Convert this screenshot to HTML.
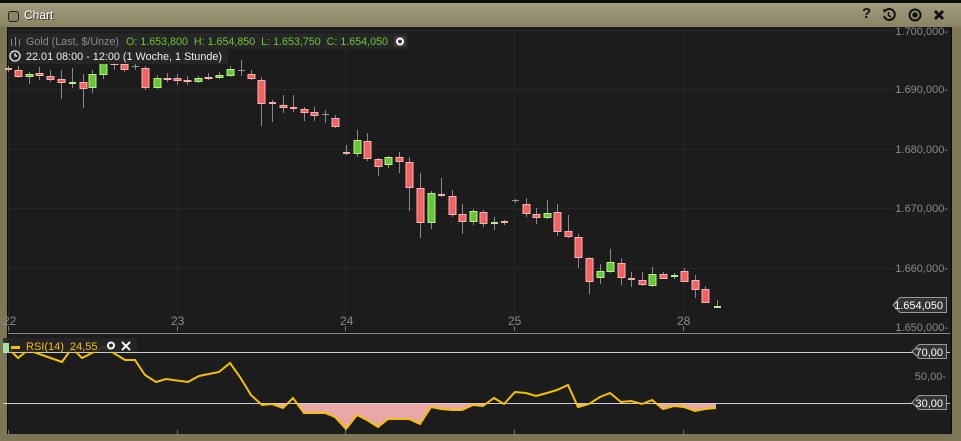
<!DOCTYPE html>
<html><head><meta charset="utf-8"><style>
html,body{margin:0;padding:0;background:#7d7758;}
body{width:961px;height:441px;overflow:hidden;position:relative;font-family:"Liberation Sans",sans-serif;}
#top{position:absolute;left:0;top:0;width:961px;height:3px;background:#0c0c0c;}
#title{position:absolute;left:0;top:3px;width:961px;height:24px;background:linear-gradient(#a29c7c,#8a8464);}
#title .t{position:absolute;left:24px;top:5px;font-size:12px;color:#fff;text-shadow:1px 1px 0 #333;}
#title .cb{position:absolute;left:8px;top:8px;width:9px;height:9px;border:1px solid #222;border-radius:3px;background:#8a8464;}
#chart{position:absolute;left:7px;top:27px;width:943px;height:407px;background:#1c1c1c;border-left:1px solid #0a0a0a;border-right:1px solid #0a0a0a;}
svg{position:absolute;left:0;top:0;}
</style></head><body>
<div id="top"></div>
<div id="title"><div class="cb"></div><div class="t">Chart</div>
<div style="position:absolute;left:862px;top:2px;font-size:15px;font-weight:bold;color:#111">?</div>
<svg style="left:881px;top:4px" width="16" height="16" viewBox="0 0 16 16"><path d="M4 4 A5.5 5.5 0 1 1 3 9" fill="none" stroke="#111" stroke-width="2"/><path d="M2 2 L6 3 L3 6Z" fill="#111"/><path d="M7.5 5 V8.5 L10 10" fill="none" stroke="#111" stroke-width="1.5"/></svg>
<svg style="left:907px;top:4px" width="16" height="16" viewBox="0 0 16 16"><circle cx="8" cy="8" r="5.5" fill="none" stroke="#111" stroke-width="2"/><circle cx="8" cy="8" r="2.7" fill="#111"/></svg>
<svg style="left:932px;top:5px" width="14" height="14" viewBox="0 0 14 14"><path d="M3 3 L11 11 M11 3 L3 11" stroke="#111" stroke-width="3"/></svg>
</div>
<div id="chart"></div>
<svg width="961" height="441" viewBox="0 0 961 441" font-family="Liberation Sans, sans-serif">
<g stroke="#272727" stroke-width="1">
<line x1="8" y1="30.5" x2="895" y2="30.5"/><line x1="8" y1="89.5" x2="895" y2="89.5"/><line x1="8" y1="149.5" x2="895" y2="149.5"/><line x1="8" y1="208.5" x2="895" y2="208.5"/><line x1="8" y1="268.5" x2="895" y2="268.5"/>
<line x1="8.5" y1="27" x2="8.5" y2="325"/><line x1="177.5" y1="27" x2="177.5" y2="315"/><line x1="345.5" y1="27" x2="345.5" y2="315"/><line x1="514.5" y1="27" x2="514.5" y2="315"/><line x1="683.5" y1="27" x2="683.5" y2="315"/>
</g>
<g stroke="#777"><line x1="8.5" y1="326" x2="8.5" y2="331"/><line x1="177.5" y1="326" x2="177.5" y2="331"/><line x1="345.5" y1="326" x2="345.5" y2="331"/><line x1="514.5" y1="326" x2="514.5" y2="331"/><line x1="683.5" y1="326" x2="683.5" y2="331"/>
<line x1="8.5" y1="430" x2="8.5" y2="434"/><line x1="177.5" y1="430" x2="177.5" y2="434"/><line x1="345.5" y1="430" x2="345.5" y2="434"/><line x1="514.5" y1="430" x2="514.5" y2="434"/><line x1="683.5" y1="430" x2="683.5" y2="434"/></g>
<line x1="8" y1="333.5" x2="950" y2="333.5" stroke="#888"/>
<g fill="#8a8a8a" font-size="11" text-anchor="end">
<text x="948" y="35">1.700,000-</text><text x="948" y="93">1.690,000-</text><text x="948" y="153">1.680,000-</text><text x="948" y="212">1.670,000-</text><text x="948" y="272">1.660,000-</text><text x="948" y="331">1.650,000-</text><text x="946" y="380">50,00-</text>
</g>
<g fill="#8a8a8a" font-size="12"><text x="3" y="325">22</text><text x="171" y="325">23</text><text x="340" y="325">24</text><text x="508" y="325">25</text><text x="677" y="325">28</text></g>
<g stroke="#8a8a8a" stroke-width="1">
<line x1="8.5" y1="66" x2="8.5" y2="72"/><line x1="18.5" y1="66" x2="18.5" y2="78"/><line x1="29.5" y1="72" x2="29.5" y2="84"/><line x1="39.5" y1="67" x2="39.5" y2="80"/><line x1="50.5" y1="70" x2="50.5" y2="82"/><line x1="61.5" y1="70" x2="61.5" y2="99"/><line x1="72.5" y1="68" x2="72.5" y2="88"/><line x1="83.5" y1="74" x2="83.5" y2="108"/><line x1="92.5" y1="70" x2="92.5" y2="93"/><line x1="103.5" y1="58" x2="103.5" y2="79"/><line x1="114.5" y1="58" x2="114.5" y2="70"/><line x1="124.5" y1="60" x2="124.5" y2="72"/><line x1="135.5" y1="62" x2="135.5" y2="70"/><line x1="145.5" y1="66" x2="145.5" y2="90"/><line x1="157.5" y1="75" x2="157.5" y2="89"/><line x1="167.5" y1="73" x2="167.5" y2="82"/><line x1="177.5" y1="74" x2="177.5" y2="85"/><line x1="187.5" y1="76" x2="187.5" y2="85"/><line x1="198.5" y1="76" x2="198.5" y2="83"/><line x1="208.5" y1="73" x2="208.5" y2="80"/><line x1="219.5" y1="72" x2="219.5" y2="79"/><line x1="230.5" y1="66" x2="230.5" y2="77"/><line x1="241.5" y1="60" x2="241.5" y2="76"/><line x1="251.5" y1="70" x2="251.5" y2="80"/><line x1="261.5" y1="77" x2="261.5" y2="126"/><line x1="272.5" y1="100" x2="272.5" y2="122"/><line x1="283.5" y1="95" x2="283.5" y2="113"/><line x1="293.5" y1="95" x2="293.5" y2="112"/><line x1="304.5" y1="107" x2="304.5" y2="121"/><line x1="314.5" y1="107" x2="314.5" y2="121"/><line x1="325.5" y1="110" x2="325.5" y2="123"/><line x1="335.5" y1="115" x2="335.5" y2="128"/><line x1="346.5" y1="145" x2="346.5" y2="155"/><line x1="357.5" y1="130" x2="357.5" y2="157"/><line x1="367.5" y1="133" x2="367.5" y2="161"/><line x1="378.5" y1="158" x2="378.5" y2="176"/><line x1="388.5" y1="156" x2="388.5" y2="168"/><line x1="399.5" y1="152" x2="399.5" y2="173"/><line x1="409.5" y1="157" x2="409.5" y2="211"/><line x1="420.5" y1="173" x2="420.5" y2="238"/><line x1="431.5" y1="191" x2="431.5" y2="229"/><line x1="441.5" y1="178" x2="441.5" y2="197"/><line x1="452.5" y1="190" x2="452.5" y2="217"/><line x1="462.5" y1="204" x2="462.5" y2="234"/><line x1="473.5" y1="209" x2="473.5" y2="225"/><line x1="483.5" y1="210" x2="483.5" y2="227"/><line x1="494.5" y1="217" x2="494.5" y2="230"/><line x1="504.5" y1="220" x2="504.5" y2="225"/><line x1="515.5" y1="199" x2="515.5" y2="203"/><line x1="526.5" y1="198" x2="526.5" y2="217"/><line x1="536.5" y1="208" x2="536.5" y2="224"/><line x1="547.5" y1="200" x2="547.5" y2="219"/><line x1="557.5" y1="204" x2="557.5" y2="236"/><line x1="568.5" y1="215" x2="568.5" y2="238"/><line x1="578.5" y1="234" x2="578.5" y2="268"/><line x1="589.5" y1="257" x2="589.5" y2="294"/><line x1="600.5" y1="264" x2="600.5" y2="284"/><line x1="610.5" y1="249" x2="610.5" y2="273"/><line x1="621.5" y1="258" x2="621.5" y2="285"/><line x1="631.5" y1="272" x2="631.5" y2="287"/><line x1="642.5" y1="272" x2="642.5" y2="286"/><line x1="652.5" y1="267" x2="652.5" y2="287"/><line x1="663.5" y1="272" x2="663.5" y2="279"/><line x1="674.5" y1="273" x2="674.5" y2="279"/><line x1="684.5" y1="268" x2="684.5" y2="282"/><line x1="695.5" y1="275" x2="695.5" y2="298"/><line x1="705.5" y1="286" x2="705.5" y2="303"/><line x1="717.5" y1="300" x2="717.5" y2="307"/>
</g>
<g fill="#f26262" stroke="#ffb0b0" stroke-width="1">
<rect x="15" y="70.5" width="7" height="6"/><rect x="36" y="73.5" width="7" height="2"/><rect x="47" y="76.5" width="7" height="3"/><rect x="58" y="79.5" width="7" height="3"/><rect x="80" y="82.5" width="7" height="6"/><rect x="111" y="61.5" width="7" height="3"/><rect x="121" y="64.5" width="7" height="5"/><rect x="142" y="68.5" width="7" height="19"/><rect x="164" y="78.5" width="7" height="1"/><rect x="174" y="78.5" width="7" height="2"/><rect x="184" y="80.5" width="7" height="1"/><rect x="205" y="77.5" width="7" height="1"/><rect x="248" y="74.5" width="7" height="4"/><rect x="258" y="80.5" width="7" height="23"/><rect x="280" y="105.5" width="7" height="2"/><rect x="301" y="109.5" width="7" height="3"/><rect x="311" y="112.5" width="7" height="3"/><rect x="332" y="118.5" width="7" height="8"/><rect x="364" y="141.5" width="7" height="17"/><rect x="375" y="159.5" width="7" height="7"/><rect x="396" y="157.5" width="7" height="4"/><rect x="406" y="162.5" width="7" height="25"/><rect x="417" y="188.5" width="7" height="34"/><rect x="449" y="196.5" width="7" height="18"/><rect x="459" y="214.5" width="7" height="7"/><rect x="480" y="212.5" width="7" height="11"/><rect x="523" y="204.5" width="7" height="9"/><rect x="533" y="214.5" width="7" height="3"/><rect x="554" y="212.5" width="7" height="19"/><rect x="565" y="231.5" width="7" height="5"/><rect x="575" y="237.5" width="7" height="20"/><rect x="586" y="258.5" width="7" height="23"/><rect x="618" y="263.5" width="7" height="14"/><rect x="639" y="280.5" width="7" height="4"/><rect x="660" y="274.5" width="7" height="4"/><rect x="681" y="271.5" width="7" height="10"/><rect x="692" y="280.5" width="7" height="9"/><rect x="702" y="289.5" width="7" height="13"/>
</g>
<g fill="#66c832" stroke="#b8f090" stroke-width="1">
<rect x="26" y="74.5" width="7" height="2"/><rect x="89" y="74.5" width="7" height="13"/><rect x="100" y="60.5" width="7" height="14"/><rect x="154" y="78.5" width="7" height="9"/><rect x="195" y="78.5" width="7" height="3"/><rect x="216" y="75.5" width="7" height="2"/><rect x="227" y="69.5" width="7" height="6"/><rect x="354" y="140.5" width="7" height="13"/><rect x="385" y="157.5" width="7" height="7"/><rect x="428" y="193.5" width="7" height="29"/><rect x="470" y="211.5" width="7" height="10"/><rect x="544" y="213.5" width="7" height="4"/><rect x="597" y="271.5" width="7" height="6"/><rect x="607" y="262.5" width="7" height="9"/><rect x="649" y="274.5" width="7" height="11"/>
</g>
<g fill="#ffaaaa"><rect x="5" y="68" width="7" height="2"/><rect x="269" y="102" width="7" height="2"/><rect x="290" y="107" width="7" height="2"/><rect x="343" y="152" width="7" height="2"/><rect x="438" y="194" width="7" height="2"/><rect x="501" y="221" width="7" height="2"/><rect x="628" y="278" width="7" height="2"/></g>
<g fill="#b8f090"><rect x="69" y="82" width="7" height="2"/><rect x="491" y="222" width="7" height="2"/><rect x="671" y="275" width="7" height="2"/><rect x="714" y="306" width="7" height="2"/></g>
<g fill="#999"><rect x="132" y="66" width="7" height="1"/><rect x="238" y="70" width="7" height="1"/><rect x="322" y="114" width="7" height="1"/><rect x="512" y="200" width="7" height="1"/></g>
<rect x="8" y="33" width="400" height="16" fill="#262626"/>
<rect x="8" y="48" width="220" height="16" fill="#262626"/>
<g font-size="11"><text x="26" y="45" fill="#8a8a8a" textLength="93" lengthAdjust="spacingAndGlyphs">Gold (Last, $/Unze)</text><text x="126" y="45" fill="#6cc832" textLength="262" lengthAdjust="spacingAndGlyphs">O: 1.653,800&#160; H: 1.654,850&#160; L: 1.653,750&#160; C: 1.654,050</text>
<text x="26" y="60" fill="#eee" textLength="196" lengthAdjust="spacingAndGlyphs">22.01 08:00 - 12:00 (1 Woche, 1 Stunde)</text></g>
<g stroke="#888" stroke-width="1"><line x1="11.5" y1="39" x2="11.5" y2="46"/><line x1="15.5" y1="37" x2="15.5" y2="46"/><line x1="19.5" y1="39" x2="19.5" y2="46"/></g>
<rect x="394" y="36" width="12" height="11" rx="2" fill="#3a3a3a"/><circle cx="400" cy="41.5" r="3" fill="none" stroke="#fff" stroke-width="2"/>
<circle cx="15" cy="56" r="5" fill="none" stroke="#eee" stroke-width="1.3"/><path d="M15 53 V56 H17.5" fill="none" stroke="#eee" stroke-width="1.2"/>
<path d="M893 305 L900 297.5 H946.5 V312.5 H900Z" fill="#333" stroke="#999"/>
<text x="943" y="309" font-size="11" fill="#fff" text-anchor="end">1.654,050</text>
<line x1="3" y1="352.5" x2="950" y2="352.5" stroke="#ccc"/>
<line x1="3" y1="403.5" x2="950" y2="403.5" stroke="#ccc"/>
<clipPath id="c"><rect x="0" y="404" width="961" height="40"/></clipPath>
<polygon clip-path="url(#c)" fill="#e8a8a8" points="251,395 262,405 272,404 283,408 293,398 304,413 325,413 335,417 346,429 357,415 367,420 378,427 388,419 409,419 420,424 431,407 441,409 452,410 462,410 473,405 483,406 494,398 504,404 515,392 526,393 536,396 547,393 557,390 568,385 578,407 589,404 600,397 610,393 621,402 631,401 642,404 652,400 663,409 674,406 684,407 695,411 705,409 716,408 716,403 251,403"/>
<polyline fill="none" stroke="#f5c000" stroke-width="2" points="5,345 18,358 28,350 62,362 72,348 82,358 104,347 125,360 135,360 145,375 156,382 166,379 188,382 199,376 219,372 230,363 240,377 251,395 262,405 272,404 283,408 293,398 304,413 325,413 335,417 346,429 357,415 367,420 378,427 388,419 409,419 420,424 431,407 441,409 452,410 462,410 473,405 483,406 494,398 504,404 515,392 526,393 536,396 547,393 557,390 568,385 578,407 589,404 600,397 610,393 621,402 631,401 642,404 652,400 663,409 674,406 684,407 695,411 705,409 716,408"/>
<rect x="3" y="338" width="134" height="14" fill="#262626" opacity="0.9"/>
<rect x="3" y="343" width="6" height="9" fill="#a8e0a0"/>
<rect x="11" y="346" width="9" height="3" fill="#f5c000"/>
<text x="26" y="350" font-size="11" fill="#f5c000">RSI(14)&#160; 24,55</text>
<circle cx="111" cy="345.5" r="3" fill="none" stroke="#fff" stroke-width="2"/>
<path d="M122 342 L130 350 M130 342 L122 350" stroke="#fff" stroke-width="2"/>
<path d="M912 351.5 L919 344.5 H946.5 V358.5 H919Z" fill="#333" stroke="#999"/>
<text x="943" y="356" font-size="11" fill="#fff" text-anchor="end">70,00</text>
<path d="M912 402.5 L919 395.5 H946.5 V409.5 H919Z" fill="#333" stroke="#999"/>
<text x="943" y="407" font-size="11" fill="#fff" text-anchor="end">30,00</text>
</svg>
</body></html>
